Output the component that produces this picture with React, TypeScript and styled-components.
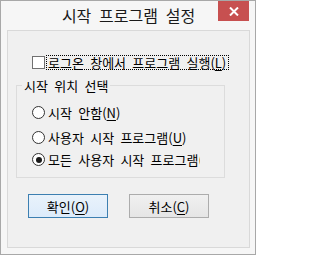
import React from "react";
import styled, { createGlobalStyle } from "styled-components";

const GlobalStyle = createGlobalStyle`
  html, body {
    margin: 0;
    padding: 0;
    background: #ffffff;
  }
  body {
    font-family: "Noto Sans CJK KR", "Noto Sans", sans-serif;
    color: #000;
  }
`;

const Window = styled.div`
  width: 256px;
  height: 255px;
  box-sizing: border-box;
  border: 1px solid #a8a8a8;
  background: #f6f6f6;
  padding: 0 5px 6px 6px;
  display: flex;
  flex-direction: column;
`;

const TitleBar = styled.div`
  height: 29px;
  display: grid;
  grid-template-columns: 1fr auto 1fr;
  align-items: start;
`;

const Title = styled.div`
  font-size: 16px;
  line-height: 29px;
  word-spacing: 0.26em;
  color: #1a1a1a;
  white-space: nowrap;
`;

const CloseButton = styled.button`
  justify-self: end;
  width: 31px;
  height: 20px;
  margin: 0 1px 0 0;
  padding: 0;
  border: none;
  background: #c75050;
  display: flex;
  align-items: center;
  justify-content: center;
`;

const Client = styled.div`
  flex: 1;
  border: 1px solid #d9d9d9;
  background: #f0f0f0;
  display: flex;
  flex-direction: column;
  font-size: 13px;
  word-spacing: 0.26em;
`;

const CheckRow = styled.div`
  display: flex;
  align-items: center;
  gap: 2px;
  height: 13px;
  margin: 25px 0 0 24px;
`;

const CheckBox = styled.span`
  width: 13px;
  height: 13px;
  box-sizing: border-box;
  border: 1px solid #707070;
  background: #fff;
  flex: none;
`;

const FocusLabel = styled.span`
  line-height: 13px;
  padding: 0 2px 0 1px;
  outline: 1px dotted #000;
  white-space: nowrap;
`;

const Group = styled.fieldset`
  width: 209px;
  box-sizing: border-box;
  margin: 9px 0 0 8px;
  padding: 0 0 11px 0;
  border: 1px solid #dcdcdc;
  min-width: 0;
`;

const Legend = styled.legend`
  margin-left: 5px;
  padding: 0 2px;
  line-height: 15px;
  white-space: nowrap;
`;

const RadioRow = styled.div<{ $top: number }>`
  display: flex;
  align-items: center;
  gap: 3px;
  height: 13px;
  margin: ${(p) => p.$top}px 0 0 15px;
`;

const Radio = styled.span<{ $checked?: boolean }>`
  width: 13px;
  height: 13px;
  box-sizing: border-box;
  border: 1px solid #333;
  border-radius: 50%;
  background: #fff;
  flex: none;
  display: flex;
  align-items: center;
  justify-content: center;

  &::after {
    content: "";
    display: ${(p) => (p.$checked ? "block" : "none")};
    width: 6px;
    height: 6px;
    border-radius: 50%;
    background: #1a1a1a;
  }
`;

const RadioLabel = styled.span`
  line-height: 20px;
  height: 20px;
  white-space: nowrap;
  overflow: hidden;
  max-width: 152px;
`;

const ButtonRow = styled.div`
  display: flex;
  gap: 21px;
  margin: 16px 0 0 20px;
`;

const PushButton = styled.button<{ $default?: boolean }>`
  width: 80px;
  height: 24px;
  box-sizing: border-box;
  padding: 0;
  font-family: inherit;
  font-size: 13px;
  color: #000;
  border: 1px solid ${(p) => (p.$default ? "#3c7fb1" : "#acacac")};
  background: ${(p) =>
    p.$default
      ? "linear-gradient(#e9f2fb, #dcebfa)"
      : "linear-gradient(#f0f0f0, #e5e5e5)"};
`;

const Key = styled.u`
  text-underline-offset: 2px;
`;

const radios = [
  { text: "시작 안함", key: "N", top: 13, checked: false },
  { text: "사용자 시작 프로그램", key: "U", top: 12, checked: false },
  { text: "모든 사용자 시작 프로그램", key: "A", top: 9, checked: true },
];

export default function App() {
  return (
    <>
      <GlobalStyle />
      <Window>
        <TitleBar>
          <div />
          <Title>시작 프로그램 설정</Title>
          <CloseButton aria-label="닫기">
            <svg width="10" height="9" viewBox="0 0 10 9">
              <path d="M1 0.5 L9 8.5 M9 0.5 L1 8.5" stroke="#fff" strokeWidth="2" />
            </svg>
          </CloseButton>
        </TitleBar>
        <Client>
          <CheckRow>
            <CheckBox />
            <FocusLabel>
              로그온 창에서 프로그램 실행(<Key>L</Key>)
            </FocusLabel>
          </CheckRow>
          <Group>
            <Legend>시작 위치 선택</Legend>
            {radios.map((r) => (
              <RadioRow key={r.key} $top={r.top}>
                <Radio $checked={r.checked} />
                <RadioLabel>
                  {r.text}(<Key>{r.key}</Key>)
                </RadioLabel>
              </RadioRow>
            ))}
          </Group>
          <ButtonRow>
            <PushButton $default>
              확인(<Key>O</Key>)
            </PushButton>
            <PushButton>
              취소(<Key>C</Key>)
            </PushButton>
          </ButtonRow>
        </Client>
      </Window>
    </>
  );
}
